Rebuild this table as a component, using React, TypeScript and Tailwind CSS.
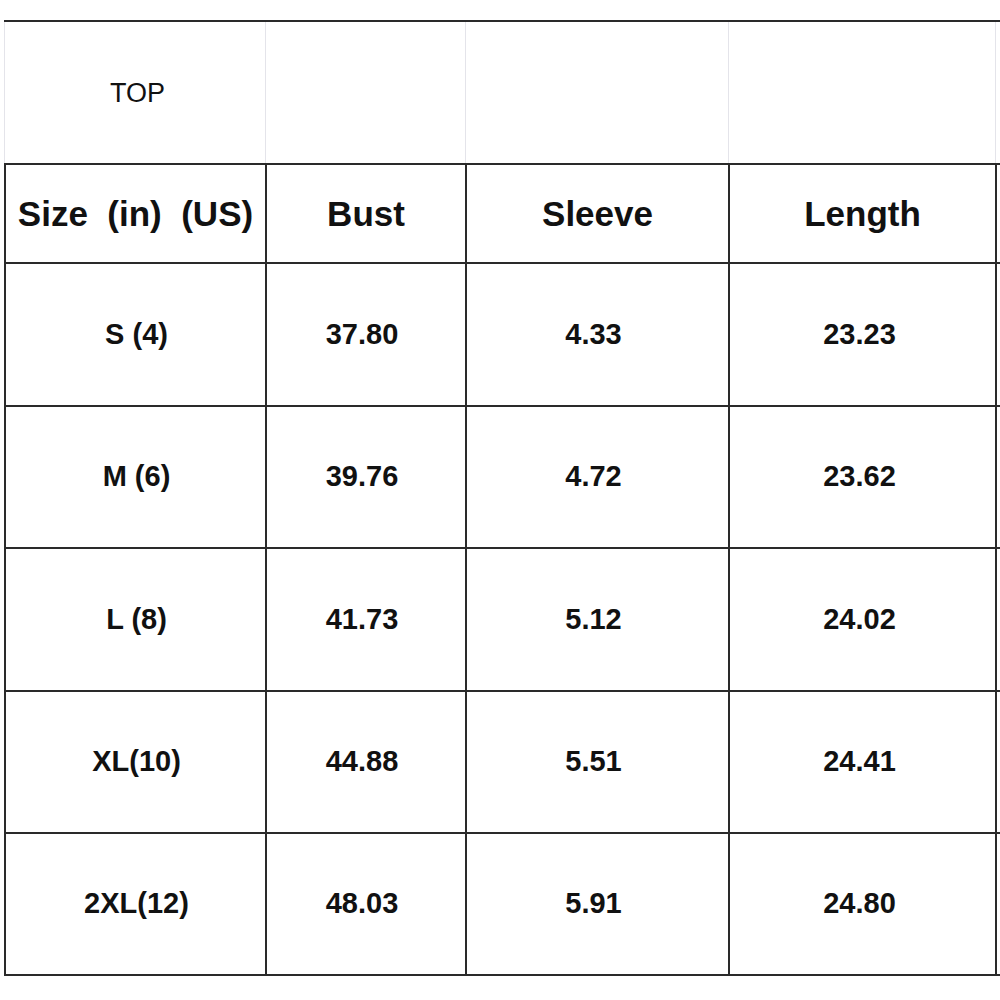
const widths = ["w-[261px]", "w-[200px]", "w-[263px]", "w-[267px]", "w-[40px]"]
const nudge = ["pl-[2px]", "pr-[8px]", "pr-[8px]", "pr-[6px]", ""]

const rows: { cells: string[]; h: string }[] = [
  { cells: ["S (4)", "37.80", "4.33", "23.23"], h: "h-[143px]" },
  { cells: ["M (6)", "39.76", "4.72", "23.62"], h: "h-[142px]" },
  { cells: ["L (8)", "41.73", "5.12", "24.02"], h: "h-[143px]" },
  { cells: ["XL(10)", "44.88", "5.51", "24.41"], h: "h-[142px]" },
  { cells: ["2XL(12)", "48.03", "5.91", "24.80"], h: "h-[144px] border-b-2" },
]

export default function App() {
  return (
    <div
      className="w-[1000px] h-[1000px] overflow-hidden bg-white pt-[20px] pl-[4px] text-[#111]"
      style={{ fontFamily: '"Liberation Sans", Arial, sans-serif' }}
    >
      <div className="w-[1040px]">
        {/* title row */}
        <div className="flex h-[143px] border-t-2 border-[#2a2a2a]">
          {widths.map((w, i) => (
            <div
              key={i}
              className={`${w} shrink-0 border-l border-[#e4e4ea] flex items-center justify-center`}
            >
              {i === 0 && <span className="text-[27px] pl-[5px] pt-[1px]">TOP</span>}
            </div>
          ))}
        </div>

        {/* header row */}
        <div className="flex h-[99px] border-t-2 border-[#2a2a2a]">
          {["Size\u00a0 (in)\u00a0 (US)", "Bust", "Sleeve", "Length", ""].map((t, i) => (
            <div
              key={i}
              className={`${widths[i]} shrink-0 border-l-2 border-[#2a2a2a] flex items-center justify-center`}
            >
              <span className="text-[35px] font-bold pt-[1px]">{t}</span>
            </div>
          ))}
        </div>

        {rows.map((r, ri) => (
          <div key={ri} className={`flex ${r.h} border-t-2 border-[#2a2a2a]`}>
            {[...r.cells, ""].map((t, i) => (
              <div
                key={i}
                className={`${widths[i]} ${nudge[i]} shrink-0 border-l-2 border-[#2a2a2a] flex items-center justify-center`}
              >
                <span className="text-[29px] font-bold">{t}</span>
              </div>
            ))}
          </div>
        ))}
      </div>
    </div>
  )
}
